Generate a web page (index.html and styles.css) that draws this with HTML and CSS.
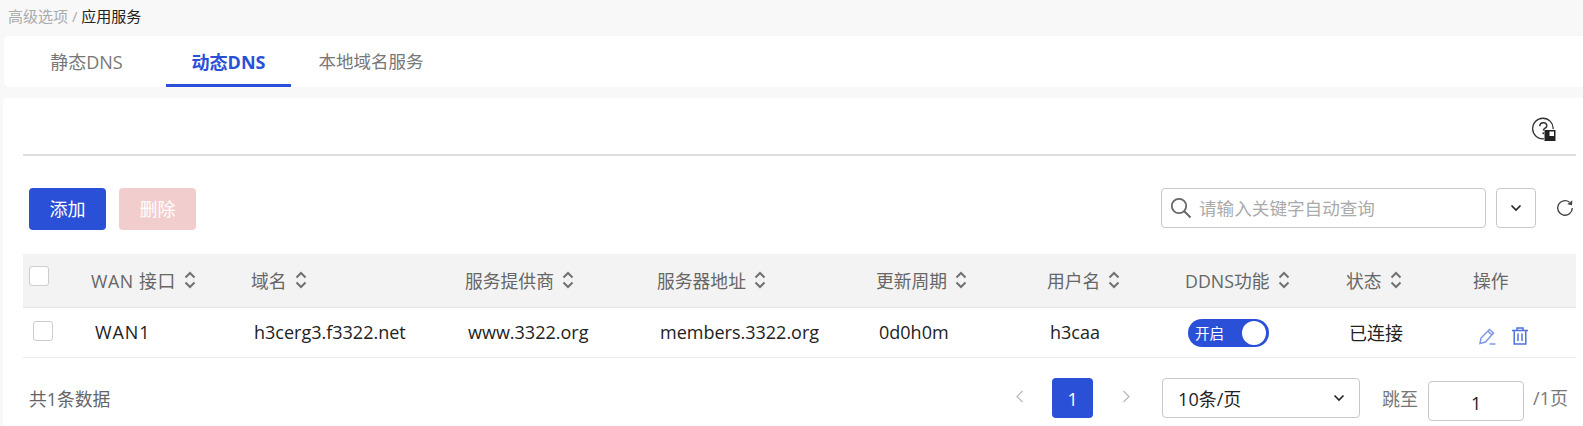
FILE: index.html
```html
<!DOCTYPE html>
<html lang="zh-CN">
<head>
<meta charset="utf-8">
<title>应用服务</title>
<link rel="stylesheet" href="styles.css">
</head>
<body>
<svg class="defs" width="0" height="0" aria-hidden="true">
  <symbol id="sort" viewBox="0 0 12 18"><path d="M1.500 6.500 6 2l4.500 4.500M1.500 11.500 6 16l4.500-4.500" fill="none" stroke="#707070" stroke-width="2"/></symbol>
  <symbol id="caret" viewBox="0 0 12 8"><path d="M1.500 1.500 6 6l4.500-4.500" fill="none" stroke="#222" stroke-width="1.600"/></symbol>
</svg>
<nav class="crumb"><span class="crumb-muted">高级选项 / </span><span class="crumb-now">应用服务</span></nav>
<div class="tabs">
  <a class="tab tab-static">静态DNS</a>
  <a class="tab tab-active">动态DNS</a>
  <a class="tab tab-local">本地域名服务</a>
</div>
<main class="card">
  <div class="help-row">
    <svg class="help" width="24" height="25" viewBox="0 0 24 25"><path d="M12 21.800A10.300 10.300 0 1 1 21.200 12" fill="none" stroke="#333" stroke-width="1.300"/><path d="M7.800 9.200c0-2.200 1.500-3.500 3.500-3.500s3.500 1.300 3.500 3.200c0 2.200-3.500 2.400-3.500 4.600" fill="none" stroke="#333" stroke-width="1.500"/><circle cx="11.300" cy="16.300" r="1" fill="#333"/><rect x="12.500" y="13" width="11" height="11" fill="#222"/><rect x="17.500" y="14.500" width="4.500" height="4.500" fill="#fff"/></svg>
  </div>
  <div class="actions">
    <button class="btn btn-add">添加</button>
    <button class="btn btn-del">删除</button>
    <div class="search">
      <svg width="22" height="22" viewBox="0 0 22 22"><circle cx="9" cy="9" r="7.200" fill="none" stroke="#666" stroke-width="1.800"/><path d="m14 14 6.500 6.500" stroke="#666" stroke-width="2"/></svg>
      <span class="placeholder">请输入关键字自动查询</span>
    </div>
    <button class="more"><svg width="12" height="8"><use href="#caret"/></svg></button>
    <svg class="refresh" width="18" height="18" viewBox="0 0 18 18"><path d="M13.500 3.200A7.300 7.300 0 1 0 16.300 9" fill="none" stroke="#444" stroke-width="1.400"/><path d="m16.400 1.200-.4 5-4.700-.9z" fill="#444"/></svg>
  </div>
  <div class="grid head">
    <div class="cell"><span class="check"></span></div>
    <div class="cell wan">WAN 接口<svg class="sort"><use href="#sort"/></svg></div>
    <div class="cell">域名<svg class="sort"><use href="#sort"/></svg></div>
    <div class="cell">服务提供商<svg class="sort"><use href="#sort"/></svg></div>
    <div class="cell">服务器地址<svg class="sort"><use href="#sort"/></svg></div>
    <div class="cell">更新周期<svg class="sort"><use href="#sort"/></svg></div>
    <div class="cell">用户名<svg class="sort"><use href="#sort"/></svg></div>
    <div class="cell">DDNS功能<svg class="sort"><use href="#sort"/></svg></div>
    <div class="cell">状态<svg class="sort"><use href="#sort"/></svg></div>
    <div class="cell">操作</div>
  </div>
  <div class="grid row">
    <div class="cell"><span class="check"></span></div>
    <div class="cell wan">WAN1</div>
    <div class="cell">h3cerg3.f3322.net</div>
    <div class="cell">www.3322.org</div>
    <div class="cell">members.3322.org</div>
    <div class="cell">0d0h0m</div>
    <div class="cell">h3caa</div>
    <div class="cell"><span class="toggle"><span>开启</span><i class="knob"></i></span></div>
    <div class="cell">已连接</div>
    <div class="cell ops">
      <svg width="19" height="19" viewBox="0 0 19 19"><path d="M2 16.500 3 11 11.500 2.500l4 3.500L7.500 15z M9.800 4.300l4 3.500" fill="none" stroke="#7f97e8" stroke-width="1.500"/><path d="M11.500 17h6" stroke="#7f97e8" stroke-width="1.500"/></svg>
      <svg width="16" height="18" viewBox="0 0 16 18"><path d="M0 3.500h16M5 3.500V1h6v2.500M2.200 3.500V17h11.600V3.500M6 6.500v7.500M10 6.500v7.500" fill="none" stroke="#4f70e3" stroke-width="1.500"/></svg>
    </div>
  </div>
  <footer class="foot">
    <span class="total">共1条数据</span>
    <div class="pager">
      <svg class="nav-prev" width="9" height="13" viewBox="0 0 9 13"><path d="M7.500 1 2 6.500 7.500 12" fill="none" stroke="#bbb" stroke-width="1.300"/></svg>
      <span class="page">1</span>
      <svg class="nav-next" width="9" height="13" viewBox="0 0 9 13"><path d="M1.500 1 7 6.500 1.500 12" fill="none" stroke="#bbb" stroke-width="1.300"/></svg>
      <div class="size"><span>10条/页</span><svg width="12" height="8"><use href="#caret"/></svg></div>
      <span class="jump">跳至</span>
      <span class="jump-input">1</span>
      <span class="pages">/1页</span>
    </div>
  </footer>
</main>
</body>
</html>
```
FILE: styles.css
```css
* { box-sizing: border-box; }
html, body { margin: 0; height: 426px; overflow: hidden; }
body {
  background: #f8f8f8;
  color: #222;
  font-family: "Open Sans", "Noto Sans CJK SC", sans-serif;
  font-size: 18px;
}
.defs { display: block; height: 0; }

.crumb { height: 36px; padding: 6px 0 0 8px; font-size: 15px; line-height: 21px; }
.crumb-muted { color: #aaa; }
.crumb-now { color: #222; }

.tabs { display: flex; height: 51px; margin-left: 4px; background: #fff; border-radius: 5px 0 0 5px; font-size: 18px; color: #777; }
.tab { display: flex; align-items: center; justify-content: center; padding-top: 1px; border-bottom: 3px solid transparent; }
.tab-static { width: 162px; padding-left: 3px; }
.tab-active { width: 125px; color: #2b50d8; font-weight: 700; border-bottom-color: #2b50d8; }
.tab-local { width: 160px; font-size: 17.500px; }

.card { margin: 11px 0 0 3px; padding: 0 7px 0 20px; height: 330px; background: #fff; border-radius: 5px 0 0 0; }
.help-row { display: flex; justify-content: flex-end; align-items: center; height: 58px; padding: 7px 20px 0 0; border-bottom: 2px solid #dedede; }

.actions { display: flex; align-items: flex-start; height: 42px; margin-top: 32px; padding-left: 6px; margin-bottom: 24px; }
.btn { width: 77px; height: 42px; border: 0; border-radius: 4px; color: #fff; font: inherit; font-size: 18px; padding: 0 0 2px; }
.btn-add { background: #2b50d8; }
.btn-del { background: #f2cdcd; margin-left: 13px; }
.search { display: flex; align-items: center; gap: 7px; width: 325px; height: 40px; margin-left: auto; padding-left: 8px; border: 1px solid #c8c8c8; border-radius: 4px; }
.placeholder { padding-bottom: 2px; color: #aaa; font-size: 17.600px; }
.more { display: flex; align-items: center; justify-content: center; width: 40px; height: 40px; margin-left: 10px; padding: 0; background: #fff; border: 1px solid #c8c8c8; border-radius: 4px; }
.refresh { margin: 11px 2px 0 20px; }

.grid { display: grid; grid-template-columns: 68px 160px 214px 192px 219px 171px 138px 161px 127px 103px; }
.cell { display: flex; align-items: center; white-space: nowrap; }
.wan { letter-spacing: 0.600px; }
.head { height: 54px; background: #f3f3f3; border-bottom: 1px solid #e6e6e6; color: #666; font-size: 17.800px; }
.head .cell { padding-bottom: 1px; }
.sort { width: 12px; height: 18px; margin-left: 8px; }
.check { display: block; width: 20px; height: 20px; background: #fff; border: 1px solid #ccc; border-radius: 3px; }
.head .check { margin: -8px 0 0 6px; }
.row { height: 50px; border-bottom: 1px solid #ececec; font-size: 18px; color: #222; }
.row .cell { padding: 0 0 2px 3px; }
.row .wan { padding-left: 4px; letter-spacing: 0.900px; }
.row .check { margin-left: 7px; margin-top: -2px; }
.toggle { display: flex; align-items: center; justify-content: space-between; width: 81px; height: 28px; margin-top: 2px; padding: 0 3px 0 7px; background: #2b50d8; border-radius: 14px; color: #fff; font-size: 14.500px; }
.knob { display: block; width: 24px; height: 24px; background: #fff; border-radius: 50%; }
.row .ops { gap: 15px; padding: 7px 0 0 5px; }

.foot { display: flex; align-items: flex-start; justify-content: space-between; padding: 20px 8px 0 6px; }
.total { margin-top: 9px; color: #666; font-size: 17.800px; line-height: 24px; }
.pager { display: flex; align-items: flex-start; }
.nav-prev { margin-top: 12px; }
.nav-next { margin-top: 12px; }
.page { width: 41px; height: 40px; margin: 0 29px 0 28px; background: #2b50d8; border-radius: 4px; color: #fff; font-size: 18px; line-height: 42px; text-align: center; }
.size { display: flex; align-items: center; justify-content: space-between; width: 198px; height: 40px; margin-left: 31px; padding: 0 14px 0 15px; border: 1px solid #c8c8c8; border-radius: 4px; font-size: 18px; }
.jump { margin: 9px 10px 0 22px; color: #777; font-size: 18px; line-height: 24px; }
.jump-input { width: 96px; height: 40px; margin-top: 3px; border: 1px solid #c8c8c8; border-radius: 4px; font-size: 18px; line-height: 42px; text-align: center; }
.pages { margin: 8px 0 0 9px; color: #777; font-size: 18px; line-height: 24px; }
```
